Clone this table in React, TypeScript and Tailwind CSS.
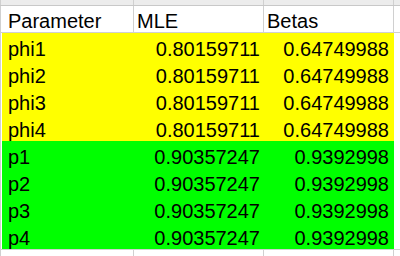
const rows = [
  { name: "phi1", mle: "0.80159711", beta: "0.64749988", fill: "bg-[#ffff00]" },
  { name: "phi2", mle: "0.80159711", beta: "0.64749988", fill: "bg-[#ffff00]" },
  { name: "phi3", mle: "0.80159711", beta: "0.64749988", fill: "bg-[#ffff00]" },
  { name: "phi4", mle: "0.80159711", beta: "0.64749988", fill: "bg-[#ffff00]" },
  { name: "p1", mle: "0.90357247", beta: "0.9392998", fill: "bg-[#00ff00]" },
  { name: "p2", mle: "0.90357247", beta: "0.9392998", fill: "bg-[#00ff00]" },
  { name: "p3", mle: "0.90357247", beta: "0.9392998", fill: "bg-[#00ff00]" },
  { name: "p4", mle: "0.90357247", beta: "0.9392998", fill: "bg-[#00ff00]" },
];

function GridRow({ className, children }: { className: string; children?: React.ReactNode }) {
  return (
    <div className={`flex ${className}`}>
      <div className="w-[2px] border-l border-[#d0d0d0]" />
      {children ?? (
        <>
          <div className="w-[132px] border-r border-[#d0d0d0]" />
          <div className="w-[130px] border-r border-[#d0d0d0]" />
          <div className="w-[130px] border-r border-[#d0d0d0]" />
        </>
      )}
    </div>
  );
}

export default function App() {
  return (
    <div
      className="w-[400px] h-[256px] overflow-hidden bg-white text-black text-[20px] leading-[20px]"
      style={{ fontFamily: '"Liberation Sans", Arial, sans-serif' }}
    >
      {/* tail of the row above */}
      <GridRow className="h-[6px] bg-[#ececec] border-b border-[#c8c8c8]" />

      {/* header */}
      <div className="flex h-[27px] border-b border-[#d0d0d0]">
        <div className="w-[2px] border-l border-[#d0d0d0]" />
        <div className="w-[132px] border-r border-[#d0d0d0] flex items-end pl-[6px] pb-[1px]">Parameter</div>
        <div className="w-[130px] border-r border-[#d0d0d0] flex items-end pl-[3px] pb-[1px]">MLE</div>
        <div className="w-[130px] border-r border-[#d0d0d0] flex items-end pl-[3px] pb-[1px]">Betas</div>
      </div>

      {rows.map((r) => (
        <div key={r.name} className="flex h-[27px]">
          <div className="w-[2px] border-l border-[#d0d0d0]" />
          <div className={`flex w-[392px] ${r.fill}`}>
            <div className="w-[132px] flex items-end pl-[6px] pb-[1px]">{r.name}</div>
            <div className="w-[130px] flex items-end justify-end pr-[4px] pb-[1px]">{r.mle}</div>
            <div className="w-[130px] flex items-end justify-end pr-[5px] pb-[1px]">{r.beta}</div>
          </div>
        </div>
      ))}

      <div className="border-t border-[#d0d0d0]">
        <GridRow className="h-[20px]" />
      </div>
    </div>
  );
}
